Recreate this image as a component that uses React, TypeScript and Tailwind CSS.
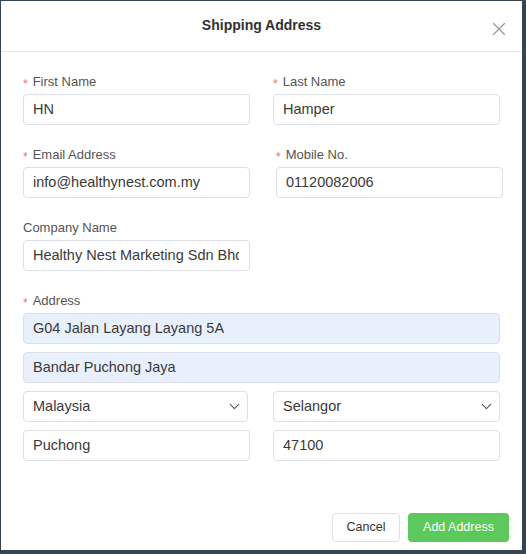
import { ChevronDown, X } from "lucide-react";

const font = { fontFamily: '"Liberation Sans", Arial, sans-serif' };

function Label({ text, required }: { text: string; required?: boolean }) {
  return (
    <div className="mb-1 flex h-4 items-center text-[13px] leading-4 text-[#555]">
      {required && <span className="mr-[5px] mt-[3px] text-[12px] leading-none text-[#f56c6c]">*</span>}
      {text}
    </div>
  );
}

function Field({ value, fill }: { value: string; fill?: boolean }) {
  return (
    <div
      className={`flex h-[31px] items-center overflow-hidden whitespace-nowrap rounded-[4px] border border-[#dcdfe6] pl-[9px] pr-[10px] text-[14.5px] text-[#3a3a3a] ${
        fill ? "bg-[#e8f0fe]" : "bg-white"
      }`}
    >
      <span className="block overflow-hidden">{value}</span>
    </div>
  );
}

function Select({ value }: { value: string }) {
  return (
    <div className="flex h-[31px] items-center justify-between rounded-[4px] border border-[#dcdfe6] bg-white pl-[9px] pr-[4px] text-[14.5px] text-[#3a3a3a]">
      <span>{value}</span>
      <ChevronDown className="h-[17px] w-[17px] text-[#555]" strokeWidth={1.5} />
    </div>
  );
}

export default function App() {
  return (
    <div className="h-[554px] w-[526px] bg-[#36454f] pl-[1px] pt-[1px]" style={font}>
      <div className="flex h-[549px] w-[521px] flex-col bg-white">
        <div className="relative flex h-[51px] items-center justify-center border-b border-[#e8e8e8] pb-[2px]">
          <h2 className="text-[14px] font-bold text-[#303133]">Shipping Address</h2>
          <X className="absolute right-[12px] top-[17px] h-[22px] w-[22px] text-[#909399]" strokeWidth={1.2} />
        </div>

        <div className="flex flex-col gap-[22px] px-[22px] pt-[22px]">
          <div className="grid grid-cols-2 gap-[23px]">
            <div>
              <Label text="First Name" required />
              <Field value="HN" />
            </div>
            <div>
              <Label text="Last Name" required />
              <Field value="Hamper" />
            </div>
          </div>

          <div className="grid grid-cols-2 gap-[23px]">
            <div>
              <Label text="Email Address" required />
              <Field value="info@healthynest.com.my" />
            </div>
            <div className="-mr-[3px] ml-[3px]">
              <Label text="Mobile No." required />
              <Field value="01120082006" />
            </div>
          </div>

          <div className="grid grid-cols-2 gap-[23px]">
            <div>
              <Label text="Company Name" />
              <Field value="Healthy Nest Marketing Sdn Bhd" />
            </div>
          </div>

          <div>
            <Label text="Address" required />
            <div className="flex flex-col gap-2">
              <Field value="G04 Jalan Layang Layang 5A" fill />
              <Field value="Bandar Puchong Jaya" fill />
              <div className="grid grid-cols-2 gap-[23px]">
                <div className="mr-[2px]">
                  <Select value="Malaysia" />
                </div>
                <Select value="Selangor" />
              </div>
              <div className="grid grid-cols-2 gap-[23px]">
                <Field value="Puchong" />
                <Field value="47100" />
              </div>
            </div>
          </div>
        </div>

        <div className="mt-auto flex justify-end gap-2 pb-[8px] pr-[13px]">
          <button className="h-[29px] w-[68px] rounded-[4px] border border-[#dcdfe6] bg-white text-[12.5px] text-[#333]">
            Cancel
          </button>
          <button className="h-[29px] w-[101px] rounded-[4px] bg-[#5bc95b] text-[12.5px] text-white">
            Add Address
          </button>
        </div>
      </div>
    </div>
  );
}
